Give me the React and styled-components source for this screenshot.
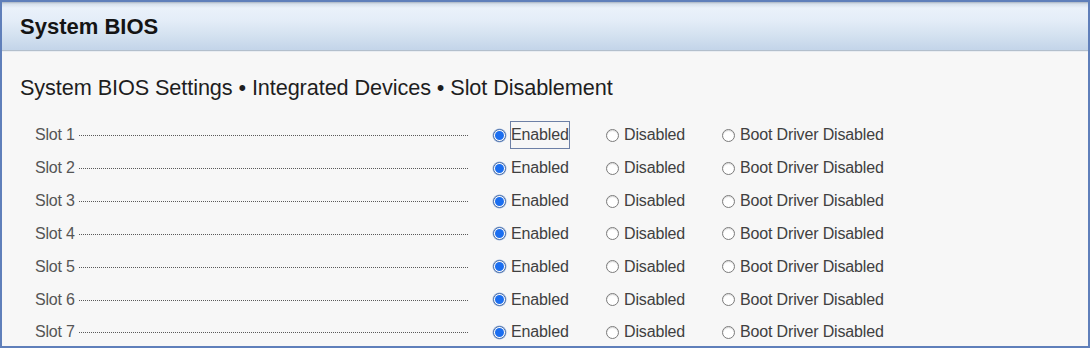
import React from "react";
import styled, { createGlobalStyle } from "styled-components";

const Global = createGlobalStyle`
  html, body { margin: 0; padding: 0; background: #f7f7f7; }
  body { font-family: "Liberation Sans", Arial, sans-serif; }
  * { box-sizing: border-box; }
`;

const Frame = styled.div`
  width: 1090px;
  height: 348px;
  border: 2px solid #5f7fba;
  background: #f7f7f7;
  display: flex;
  flex-direction: column;
  overflow: hidden;
`;

const Header = styled.div`
  height: 49px;
  flex: none;
  display: flex;
  align-items: center;
  padding-left: 18px;
  background: linear-gradient(
    to bottom,
    #a9b4c2 0px,
    #d6e0ec 2px,
    #eaf1fa 6px,
    #e4edf8 18px,
    #d3e1f0 34px,
    #c4d5e9 47px
  );
  border-bottom: 1px solid #b3bfcc;
  box-shadow: 0 1px 0 #e9edf2;
`;

const HeaderTitle = styled.h1`
  margin: 1px 0 0 0;
  font-size: 22px;
  font-weight: bold;
  color: #141414;
`;

const Breadcrumb = styled.h2`
  margin: 25px 0 0 18px;
  font-size: 21.7px;
  line-height: 24px;
  font-weight: normal;
  color: #1e1e1e;
  letter-spacing: -0.1px;
`;

const Rows = styled.div`
  margin-top: 19px;
  display: flex;
  flex-direction: column;
`;

const Row = styled.div`
  height: 32.83px;
  display: grid;
  grid-template-columns: 458px 113px 116px 1fr;
  align-items: center;
  padding-left: 33px;
`;

const LabelCell = styled.div`
  display: flex;
  align-items: center;
  margin-right: 25px;
`;

const SlotLabel = styled.span`
  font-size: 16px;
  color: #555;
  letter-spacing: -0.2px;
  line-height: 18px;
`;

const Leader = styled.span`
  flex: 1;
  margin-left: 4px;
  margin-top: 1px;
  border-bottom: 1px dotted #5a5a5a;
  height: 0;
`;

const Option = styled.label`
  display: flex;
  align-items: center;
  gap: 5px;
`;

const Radio = styled.span`
  width: 13px;
  height: 13px;
  flex: none;
  border-radius: 50%;
  border: 1px solid ${(p) => (p.$checked ? "#4b6fa8" : "#7b7b7b")};
  background: #fff;
  display: flex;
  align-items: center;
  justify-content: center;
  box-shadow: ${(p) => (p.$checked ? "0 0 0 0.5px #9fb6dc" : "inset 0 1px 1px #d8d8d8")};
  &::after {
    content: "";
    width: 9px;
    height: 9px;
    border-radius: 50%;
    background: ${(p) => (p.$checked ? "#1b6ef0" : "transparent")};
  }
`;

const OptionText = styled.span`
  font-size: 16px;
  line-height: 18px;
  color: #404040;
  letter-spacing: -0.15px;
  padding: 4px 0;
  margin: -4px -1px;
  border: 1px solid ${(p) => (p.$focused ? "#6d80a6" : "transparent")};
`;

const options = ["Enabled", "Disabled", "Boot Driver Disabled"];
const slots = [1, 2, 3, 4, 5, 6, 7];

export default function App() {
  return (
    <>
      <Global />
      <Frame>
        <Header>
          <HeaderTitle>System BIOS</HeaderTitle>
        </Header>
        <Breadcrumb>System BIOS Settings • Integrated Devices • Slot Disablement</Breadcrumb>
        <Rows>
          {slots.map((n) => (
            <Row key={n}>
              <LabelCell>
                <SlotLabel>Slot {n}</SlotLabel>
                <Leader />
              </LabelCell>
              {options.map((o, i) => (
                <Option key={o}>
                  <Radio $checked={i === 0} />
                  <OptionText $focused={n === 1 && i === 0}>{o}</OptionText>
                </Option>
              ))}
            </Row>
          ))}
        </Rows>
      </Frame>
    </>
  );
}
